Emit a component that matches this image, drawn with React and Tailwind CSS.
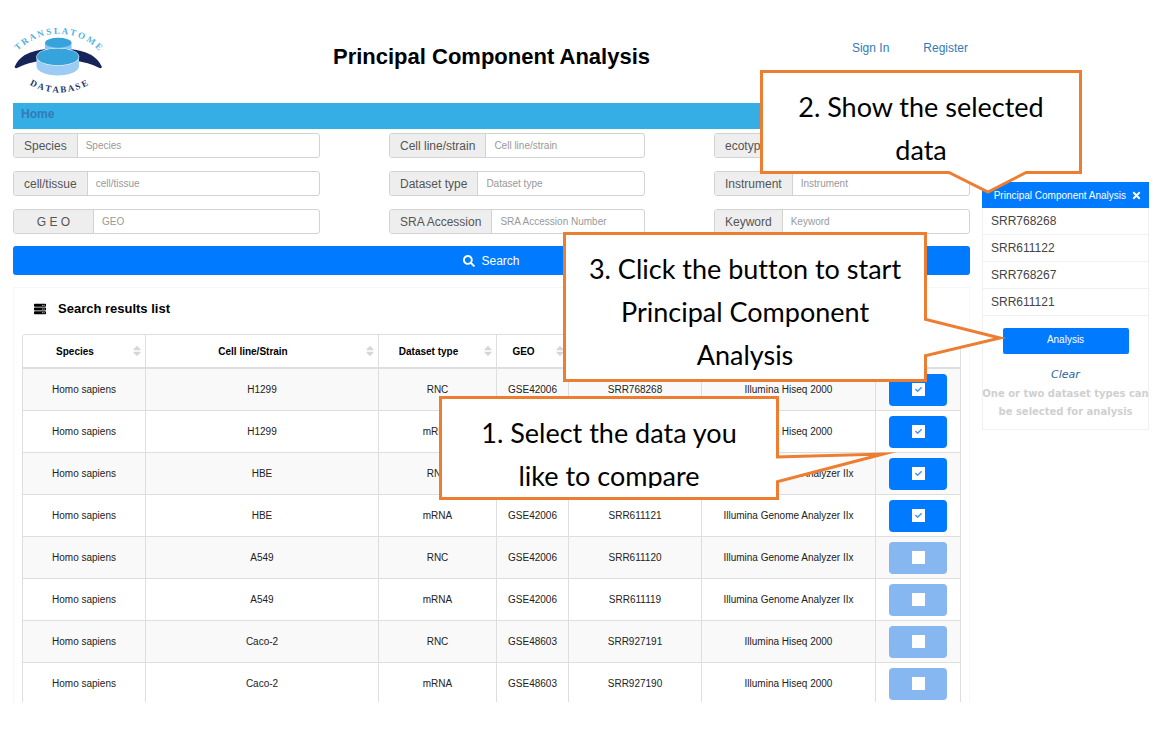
import { useState } from 'react';
import { FaSearch, FaServer, FaSort, FaCheck, FaTimes } from 'react-icons/fa';

const FIELDS = [
  { id: 'species', label: 'Species', placeholder: 'Species' },
  { id: 'cell-line', label: 'Cell line/strain', placeholder: 'Cell line/strain' },
  { id: 'ecotype', label: 'ecotype', placeholder: 'ecotype' },
  { id: 'tissue', label: 'cell/tissue', placeholder: 'cell/tissue' },
  { id: 'dataset-type', label: 'Dataset type', placeholder: 'Dataset type' },
  { id: 'instrument', label: 'Instrument', placeholder: 'Instrument' },
  { id: 'geo', label: 'G E O', placeholder: 'GEO', wide: true },
  { id: 'sra', label: 'SRA Accession', placeholder: 'SRA Accession Number' },
  { id: 'keyword', label: 'Keyword', placeholder: 'Keyword' },
];

const COLUMNS = [
  { name: 'Species', width: 'w-[123px]', sortable: true },
  { name: 'Cell line/Strain', width: '', sortable: true },
  { name: 'Dataset type', width: 'w-[118px]', sortable: true },
  { name: 'GEO', width: 'w-[72px]', sortable: true },
  { name: 'SRA Accession', width: 'w-[133px]', sortable: true },
  { name: 'Instrument', width: 'w-[174px]', sortable: true },
  { name: 'Analysis', width: 'w-[85px]', sortable: false },
];

const ROWS = [
  ['H1299', 'RNC', 'GSE42006', 'SRR768268', 'Illumina Hiseq 2000'],
  ['H1299', 'mRNA', 'GSE42006', 'SRR768267', 'Illumina Hiseq 2000'],
  ['HBE', 'RNC', 'GSE42006', 'SRR611122', 'Illumina Genome Analyzer IIx'],
  ['HBE', 'mRNA', 'GSE42006', 'SRR611121', 'Illumina Genome Analyzer IIx'],
  ['A549', 'RNC', 'GSE42006', 'SRR611120', 'Illumina Genome Analyzer IIx'],
  ['A549', 'mRNA', 'GSE42006', 'SRR611119', 'Illumina Genome Analyzer IIx'],
  ['Caco-2', 'RNC', 'GSE48603', 'SRR927191', 'Illumina Hiseq 2000'],
  ['Caco-2', 'mRNA', 'GSE48603', 'SRR927190', 'Illumina Hiseq 2000'],
];

function Logo() {
  return (
    <svg viewBox="13 5 92 72" className="w-[92px] h-[72px] overflow-visible" role="img" aria-label="Translatome Database">
      <defs>
        <path id="arc-top" d="M13 36.500 A 57 57 0 0 1 104 36.500" />
        <path id="arc-bottom" d="M22 59.700 A 60 60 0 0 0 96 59.700" />
      </defs>
      <text fontSize="9" fontWeight="bold" fill="#55b0e0" textAnchor="middle" className="font-['Liberation_Serif',serif]">
        <textPath href="#arc-top" startOffset="50%">T R A N S L A T O M E</textPath>
      </text>
      <path d="M47 29 Q21 31 14.500 47 Q15 48.500 17 48 Q27 42.500 45 40 Z" fill="#17245a" />
      <path d="M69 29 Q95 31 102 47 Q101.500 48.500 99.500 48 Q90 42.500 71 40 Z" fill="#17245a" />
      <path d="M45 23 V30 A13.300 5 0 0 0 71.500 30 V23 Z" fill="#8cc4ee" />
      <ellipse cx="58.300" cy="22.700" rx="13.200" ry="5" fill="#36a3db" />
      <path d="M36.500 37 V46 A21.200 9.500 0 0 0 79 46 V37 Z" fill="#9ccbf3" />
      <ellipse cx="57.800" cy="36.800" rx="21.500" ry="8.900" fill="#fff" />
      <ellipse cx="57.800" cy="36.800" rx="21" ry="8.400" fill="#36a3db" />
      <text fontSize="9" fontWeight="bold" fill="#25356b" textAnchor="middle" className="font-['Liberation_Serif',serif]">
        <textPath href="#arc-bottom" startOffset="50%">D A T A B A S E</textPath>
      </text>
    </svg>
  );
}

function Field({ field }) {
  return (
    <div className="flex h-[25px] min-w-0 rounded-[3px] border border-[#d2d2d2] overflow-hidden bg-white">
      <label
        htmlFor={field.id}
        className={`flex items-center justify-center shrink-0 bg-[#eeeeee] border-r border-[#d2d2d2] text-xs text-[#555] ${field.wide ? 'w-20' : 'px-[10px]'}`}
      >
        {field.label}
      </label>
      <input
        id={field.id}
        type="text"
        placeholder={field.placeholder}
        className="flex-1 min-w-0 px-2 text-[10px] text-[#555] placeholder:text-[#999] outline-none"
      />
    </div>
  );
}

function SelectBox({ accession, checked, onToggle }) {
  return (
    <label
      className={`relative inline-flex items-center justify-center w-[58px] h-8 rounded align-middle cursor-pointer ${checked ? 'bg-[#007bff]' : 'bg-[#86b7f1]'}`}
    >
      <input
        type="checkbox"
        aria-label={`Select ${accession}`}
        checked={checked}
        onChange={onToggle}
        className="appearance-none w-[13px] h-[13px] bg-white"
      />
      {checked && <FaCheck className="absolute w-[7px] h-[7px] text-[#3a96f5] pointer-events-none" />}
    </label>
  );
}

function ResultsTable({ selected, onToggle }) {
  return (
    <div className="h-[368px] overflow-hidden rounded-t border-t border-[#dedede]">
      <table className="w-full table-fixed border-separate border-spacing-0 border-l border-[#dedede] text-center text-[10px] text-[#222]">
        <thead>
          <tr>
            {COLUMNS.map(col => (
              <th
                key={col.name}
                scope="col"
                className={`h-[34px] p-0 border-r border-b-2 border-[#dedede] font-bold text-black ${col.width}`}
              >
                <div className="flex items-center gap-[6px] pr-1">
                  <span className="flex-1 whitespace-nowrap">{col.name}</span>
                  {col.sortable && <FaSort className="w-[8px] h-[14px] text-[#d6d6d6] shrink-0" />}
                </div>
              </th>
            ))}
          </tr>
        </thead>
        <tbody>
          {ROWS.map(row => (
            <tr key={row[3]} className="odd:bg-[#f9f9f9]">
              {['Homo sapiens', ...row].map((value, i) => (
                <td key={i} className="h-[42px] p-0 border-r border-b border-[#dedede] whitespace-nowrap">
                  {value}
                </td>
              ))}
              <td className="h-[42px] p-0 border-r border-b border-[#dedede]">
                <SelectBox
                  accession={row[3]}
                  checked={selected.includes(row[3])}
                  onToggle={() => onToggle(row[3])}
                />
              </td>
            </tr>
          ))}
        </tbody>
      </table>
    </div>
  );
}

function SelectionPanel({ selected, onClear }) {
  return (
    <aside className="w-[167px] shrink-0 mt-[182px] self-start border border-t-0 border-[#f0f0f0]">
      <div className="flex items-center justify-end gap-[6px] h-[26px] pr-2 -mx-px bg-[#007bff] text-white text-[10px]">
        <h2 className="whitespace-nowrap">Principal Component Analysis</h2>
        <button type="button" aria-label="Close">
          <FaTimes className="w-[9px] h-[11px]" />
        </button>
      </div>
      <ul className="text-xs text-[#444]">
        {selected.map(id => (
          <li key={id} className="h-[27px] leading-[26px] pl-2 border-b border-[#f0f0f0]">{id}</li>
        ))}
      </ul>
      <div className="flex flex-col items-center pt-3 pb-2">
        <button type="button" className="w-[126px] h-[26px] pb-1 rounded-xs bg-[#007bff] text-white text-[10px]">
          Analysis
        </button>
        <button
          type="button"
          onClick={onClear}
          className="mt-3 mb-px h-[18px] italic text-[11px] text-[#2a64a5] font-['DejaVu_Sans',sans-serif]"
        >
          Clear
        </button>
        <p className="text-center text-[10px] leading-[18px] font-bold text-[#d0d0d0] whitespace-nowrap font-['DejaVu_Sans',sans-serif]">
          One or two dataset types can<br />be selected for analysis
        </p>
      </div>
    </aside>
  );
}

// Annotation box; `tail` is the open outline of the pointer in page pixels
function Callout({ className, tailClass, viewBox, tail, children }) {
  return (
    <div className={`absolute bg-white border-3 border-[#ed7d31] ${className}`}>
      <div className="h-full overflow-hidden text-center text-[27px] leading-[43px] text-black whitespace-nowrap font-['Lato',sans-serif] [font-variant-ligatures:none]">
        {children}
      </div>
      <svg viewBox={viewBox} className={`absolute ${tailClass}`} aria-hidden="true">
        <polyline points={tail} fill="#fff" stroke="#ed7d31" strokeWidth="3" strokeMiterlimit="12" />
      </svg>
    </div>
  );
}

export default function App() {
  const [selected, setSelected] = useState(['SRR768268', 'SRR611122', 'SRR768267', 'SRR611121']);

  const toggle = (id) => {
    setSelected(prev => (prev.includes(id) ? prev.filter(x => x !== id) : [...prev, id]));
  };

  return (
    <div className="relative flex gap-3 pl-[13px] pr-4 pb-10 bg-white font-['Liberation_Sans',Arial,sans-serif]">
      <main className="flex-1 min-w-0">
        <header className="grid grid-cols-[1fr_auto_1fr] h-[103px] pt-[25px]">
          <Logo />
          <h1 className="mt-4 text-[22px] leading-8 font-bold text-black whitespace-nowrap">Principal Component Analysis</h1>
          <div className="flex justify-end gap-[34px] pr-[2px] mt-[15px] text-xs text-[#337ab7]">
            <a href="#signin">Sign In</a>
            <a href="#register">Register</a>
          </div>
        </header>

        <nav className="h-[26px] px-2 bg-[#34aee4] text-xs leading-[23px] font-bold text-[#337ab7]">
          <a href="#home">Home</a>
        </nav>

        <form className="mt-1" onSubmit={e => e.preventDefault()}>
          <div className="grid grid-cols-[307fr_256fr_256fr] gap-x-[69px] gap-y-[13px]">
            {FIELDS.map(field => <Field key={field.id} field={field} />)}
          </div>
          <button
            type="submit"
            className="mt-3 flex items-center justify-center gap-[6px] w-full h-[29px] rounded-[3px] bg-[#007bff] text-white text-xs"
          >
            <FaSearch className="w-3 h-3" />
            Search
          </button>
        </form>

        <section className="mt-3 px-2 border-x border-t border-[#f6f6f6]">
          <h2 className="flex items-center gap-3 h-[42px] mb-1 pl-3 text-[13px] font-bold text-black">
            <FaServer className="w-3 h-3" />
            Search results list
          </h2>
          <ResultsTable selected={selected} onToggle={toggle} />
        </section>
      </main>

      <SelectionPanel selected={selected} onClear={() => setSelected([])} />

      <Callout
        className="right-[386px] top-[396px] w-[340px] h-[104px] pt-3 pb-[9px]"
        tailClass="left-[334px] top-[47px] w-[130px] h-[44px]"
        viewBox="776 446 130 44"
        tail="776,457 883,454 776,482"
      >
        1. Select the data you<br />like to compare
      </Callout>
      <Callout
        className="right-[238px] top-[232px] w-[364px] h-[150px] pt-3"
        tailClass="left-[358px] top-[75px] w-[90px] h-[60px]"
        viewBox="924 310 90 60"
        tail="924,319 1000,338 924,356"
      >
        3. Click the button to start<br />Principal Component<br />Analysis
      </Callout>
      <Callout
        className="right-[83px] top-[70px] w-[322px] h-[104px] pt-3"
        tailClass="left-[177px] top-[98px] w-[100px] h-[30px]"
        viewBox="940 171 100 30"
        tail="946,171 988,192 1029,171"
      >
        2. Show the selected<br />data
      </Callout>
    </div>
  );
}
